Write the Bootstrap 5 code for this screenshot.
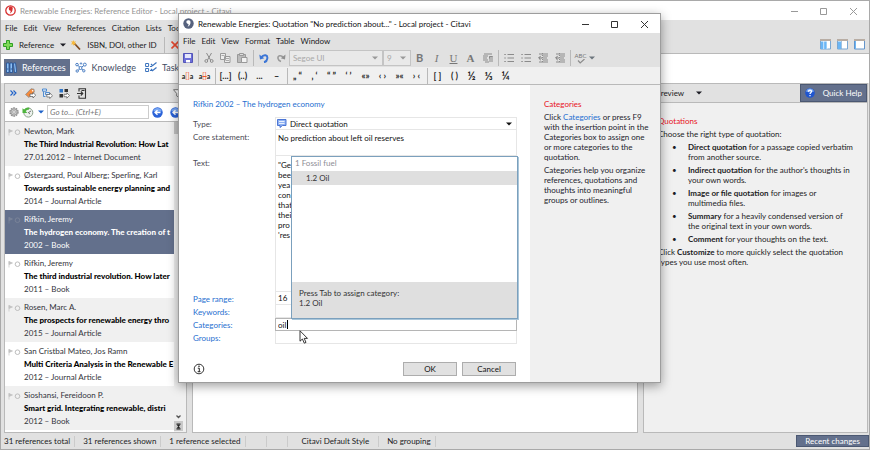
<!DOCTYPE html>
<html lang="en">
<head>
<meta charset="utf-8">
<meta name="viewport" content="width=device-width, initial-scale=1">
<title>Renewable Energies: Reference Editor - Citavi</title>
<link rel="stylesheet" href="https://cdn.jsdelivr.net/npm/bootstrap@5.3.0/dist/css/bootstrap.min.css">
<style>
  :root { --slate:#63708c; --bar:#e1e1e1; --pane:#f0f0f0; --line:#b9b9b9; --link:#1f6fd0; --alert:#e8121c; }
  body { font-family:Lato,"Open Sans",sans-serif; font-size:8px; line-height:10px; color:#1c1c24; background:var(--bar); }
  button, input, select, textarea { font:inherit; color:inherit; }
  button { background:none; border:0; padding:0; }
  svg { display:block; flex:none; }
  h1, h2, p, ul { font-size:inherit; line-height:inherit; margin:0; font-weight:400; }
  a { color:var(--link); text-decoration:none; }
  .bar { background:var(--bar); }
  .pane { background:var(--pane); }
  .titlebar { height:19px; background:#fff; }
  .titlebar h1 { font-size:8px; }
  .menus { height:16px; gap:6px; padding:0 4px; }
  .tools { height:18px; }
  .tool { width:17px; height:16px; display:flex; align-items:center; justify-content:center; }
  .rule { width:1px; height:16px; background:var(--line); margin:0 1px 0 2px; flex:none; }
  .win-btns { color:#333; padding-right:11px; }

  .app { min-height:100vh; border:1px solid #a9a9a9; }
  .app > .titlebar { color:#949494; }
  .app > .titlebar .win-btns { color:#999; }
  .main-tools { gap:5px; padding-left:2px; }
  .main-tools button { gap:6px; }
  .edge { border-bottom:1px solid var(--line); }
  .tabs { height:29px; background:#fff; padding:0 3px 2px; gap:3px; }
  .tab { height:17px; font-size:9px; gap:5px; padding:0 4px 0 2px; color:#3f4c63; }
  .tab.on { background:var(--slate); color:#fff; }
  .work { padding:0 1px 0 3px; gap:5px; background:var(--bar); }
  .frame { border:1px solid var(--line); min-width:0; }
  .side { width:183px; }
  .help { width:225px; }
  .phead { height:19px; }
  .finder { gap:3px; padding-left:4px; }
  .goto { width:102px; height:14px; border:1px solid #ccc; background:#fff; font-style:italic; padding:0 2px; }
  .goto::placeholder { color:#777; opacity:1; }
  .refs { width:169px; flex:none; overflow:hidden; }
  .ref { height:44px; padding:3px 0 0 3px; gap:3px; text-align:left; line-height:13px; white-space:nowrap; background:#fff; color:#33333b; align-items:flex-start; }
  .ref:nth-child(odd) { background:var(--pane); }
  .ref b { display:block; color:#000; font-weight:900; }
  .ref.on { background:var(--slate); color:#fff; }
  .ref.on b { color:#fff; }
  .track { background:var(--pane); padding-bottom:1px; }
  .thumb { height:12px; width:9px; background:#c3c3c3; }
  .solid { background:var(--slate); color:#fff; border:1px solid #4b5872; }
  .status { height:16px; }
  .status > span { padding:0 4px 0 8px; border-right:1px solid #cbcbcb; height:11px; white-space:nowrap; }
  .status > .first { padding-left:3px; }
  .status > .blank { width:21px; }
  .status > .roomy { padding:0 9px 0 14px; }
  .note { padding:13px 8px 0 14px; }
  .note p { margin-bottom:3px; }
  .note h2, .tips h2 { color:var(--alert); margin-bottom:3px; font-size:8px; line-height:10px; }
  .note ul { list-style:none; padding:0; }
  .note li { display:flex; margin-bottom:3px; padding-left:14px; }
  .note li::before { content:"\2022"; width:16px; flex:none; }

  .dialog-win { position:absolute; left:178px; top:13px; width:483px; background:#fff; border:1px solid #9d9d9d; box-shadow:0 3px 10px rgba(0,0,0,.38); z-index:5; }
  .dialog-win > .titlebar { color:#111; }
  .pick { display:grid; align-items:center; }
  .pick > * { grid-area:1/1; }
  .pick > svg, .pick > .caret-bar { pointer-events:none; }
  .pick select { appearance:none; border:0; background:none; width:100%; padding:0 0 0 14px; }
  .pick .end { justify-self:end; margin-right:4px; }
  .pick.off { border:1px solid #c4c4c4; height:16px; color:#999; background:#e9e9e9; }
  .pick.off select { padding:0 3px; opacity:1; color:#a8a8a8; }
  .pick.font-name { width:94px; }
  .pick.font-size { width:28px; }
  .letter { font-size:11px; color:#777; }
  .letter.serif { font-family:"Liberation Serif",serif; }
  .abc { font-size:6px; line-height:6px; color:#777; }
  .quotes { color:#222; }
  .quotes .tool { font-size:9px; font-weight:700; white-space:nowrap; }
  .quotes .frac { font-size:11px; }
  .quotes .ins { font-size:7px; }
  .ins i { font-style:normal; font-weight:400; color:#f0562a; }
  .form-side { padding:14px 13px 6px 14px; }
  .tips { width:130px; padding:14px 8px 0 14px; }
  .tips p { margin-bottom:3px; color:#22222c; }
  .fields { display:grid; grid-template-columns:82px 1fr; color:#4c4c55; }
  .fields > label, .fields > a { padding-top:2px; }
  .cell { border:1px solid #e6e6e6; border-top:0; height:13px; min-width:0; color:#111; padding:0; }
  .cell.first { border-top:1px solid #e6e6e6; }
  .cell input, .cell textarea { border:0; width:100%; height:100%; padding:0 2px; background:none; display:block; resize:none; outline:0; overflow:hidden; }
  .cell.core { height:26px; padding-top:3px; }
  .cell.body-text { height:136px; padding-top:4px; }
  .cell.active { border:1px solid #b5b5b5; }
  .caret-bar { width:1px; height:9px; background:#000; margin-left:11px; }
  .form-end { margin-top:18px; gap:5px; padding-right:1px; }
  .push { width:54px; height:14px; background:var(--bar); border:1px solid #adadad; color:#111; }
  .suggest { position:absolute; left:112px; top:142px; width:227px; height:163px; background:#fff; border:1px solid #7ba0bd; box-shadow:1px 1px 0 #a9c6da; color:#333; }
  .suggest .group { color:#8d8d95; padding:1px 3px; height:14px; }
  .suggest .hit { background:#dfdfdf; height:14px; padding:1px 14px; text-align:left; color:#333; }
  .suggest .hint { background:#dfdfdf; padding:6px 7px 10px; color:#333; }
  .pointer { position:absolute; left:120px; top:316px; }
</style>
<script src="https://cdn.jsdelivr.net/npm/bootstrap@5.3.0/dist/js/bootstrap.bundle.min.js"></script>
</head>
<body>
<svg width="0" height="0" class="position-absolute">
  <symbol id="down" viewBox="0 0 6 4"><path d="M0 .5h6L3 3.5z" fill="currentColor"/></symbol>
  <symbol id="win" viewBox="0 0 67 8"><g fill="none" stroke="currentColor"><path d="M0 4.500h7M29.500 1.500h6v6h-6z M59 1l7 7M66 1l-7 7"/></g></symbol>
  <symbol id="flag" viewBox="0 0 13 7"><path d="M1 0v6.500M1 .5l3.500 1.500L1 3.500z" fill="#bdbdbd" stroke="#c4c4c4" stroke-width=".7"/><circle cx="9.500" cy="3.200" r="2.300" fill="none" stroke="#bdbdbd"/></symbol>
  <symbol id="arrowball" viewBox="0 0 11 11"><circle cx="5.500" cy="5.500" r="5.200" fill="#2a62d8"/><path d="M1.200 4a4.600 4.600 0 0 1 8.600 0c-2 1.200-6 1.200-8.600 0z" fill="#7aa8f3"/><path d="M8.500 5.500h-5M5.500 3.200L3 5.500l2.500 2.300" fill="none" stroke="#fff" stroke-width="1.300"/></symbol>
  <symbol id="bullets" viewBox="0 0 10 10"><path d="M3.500 1.500H10M3.500 5H10M3.500 8.500H10M.3 1.500h1.500M.3 5h1.500M.3 8.500h1.500" stroke="#8b8b8b" fill="none"/></symbol>
  <symbol id="indent" viewBox="0 0 10 10"><path d="M1 1h9M5 3h5M5 5h4M5 7h5M1 9h9" stroke="#8b8b8b"/><path d="M4.500 5H1M2.800 2.800L.6 5l2.200 2.200" stroke="#777" fill="none"/><path d="M4.500 0v10" stroke="#8b8b8b" stroke-dasharray="1 1"/></symbol>
</svg>

<div class="app d-flex flex-column">
  <header class="titlebar d-flex align-items-center justify-content-between">
    <div class="d-flex align-items-center gap-1 ps-1">
      <svg width="11" height="11" viewBox="0 0 11 11"><circle cx="5.500" cy="5.500" r="4.700" fill="#fff" stroke="#d62f2f" stroke-width="1.300"/><path d="M4 2.500a2 1.700 0 0 1 3.600 1.600c0 2-1 3.600-2.800 4.400.7-1 1-1.800.9-2.700C4.200 5.600 3.300 4 4 2.500z" fill="#d62f2f"/></svg>
      <h1>Renewable Energies: Reference Editor - Local project - Citavi</h1>
    </div>
    <div class="win-btns"><svg width="67" height="8"><use href="#win"/></svg></div>
  </header>

  <nav class="menus bar d-flex align-items-center">
    <button>File</button><button>Edit</button><button>View</button><button>References</button><button>Citation</button><button>Lists</button><button>Tools</button>
  </nav>

  <div class="tools bar edge d-flex align-items-center justify-content-between">
    <div class="main-tools d-flex align-items-center">
      <button class="d-flex align-items-center">
        <svg width="10" height="10" viewBox="0 0 10 10"><path d="M3.500.5h3v3h3v3h-3v3h-3v-3h-3v-3h3z" fill="#7ed957" stroke="#2f9e24"/></svg>
        <span>Reference</span>
        <svg width="6" height="4"><use href="#down"/></svg>
      </button>
      <button class="d-flex align-items-center">
        <svg width="10" height="10" viewBox="0 0 10 10"><path d="M3.500 3.500l5.500 6" stroke="#7d4a21" stroke-width="1.700"/><path d="M2.500 0l.6 1.700L5 1.200 4 3l1.200 1.500-2-.3L2.500 6l-.6-1.800L0 4.400l1.200-1.600L0 1.300l1.900.3z" fill="#f6b93c"/></svg>
        <span>ISBN, DOI, other ID</span>
      </button>
      <div class="rule"></div>
      <button aria-label="Delete"><svg width="8" height="8" viewBox="0 0 8 8"><path d="M.5.5l7 7M7.500.5l-7 7" stroke="#e8492f" stroke-width="1.600"/></svg></button>
    </div>
    <div class="d-flex pe-1" style="gap:6px">
      <button aria-label="Three columns"><svg width="11" height="11" viewBox="0 0 11 11"><path d="M.5 1.500h10v8.500H.5z" fill="#fff" stroke="#7aa7d3"/><path d="M0 0h11v2H0z" fill="#b8ada4"/><path d="M1 2.500h6V10H1z" fill="#6bb6f5"/><path d="M3.700 2v8M7 2v8" stroke="#fff" stroke-width=".7"/></svg></button>
      <button aria-label="Two columns"><svg width="11" height="11" viewBox="0 0 11 11"><path d="M.5 1.500h10v8.500H.5z" fill="#fff" stroke="#7aa7d3"/><path d="M0 0h11v2H0z" fill="#b8ada4"/><path d="M1 2.500h3V10H1z" fill="#6bb6f5"/><path d="M4.500 2v8" stroke="#7aa7d3" stroke-width=".7"/></svg></button>
      <button aria-label="One column"><svg width="11" height="11" viewBox="0 0 11 11"><path d="M.5 1.500h10v8.500H.5z" fill="#fff" stroke="#6394cb"/><path d="M0 0h11v2H0z" fill="#b8ada4"/><path d="M1.500 2v8" stroke="#6bb6f5"/></svg></button>
    </div>
  </div>

  <nav class="tabs d-flex align-items-center">
    <button class="tab on d-flex align-items-center">
      <svg width="11" height="11" viewBox="0 0 11 11"><path d="M.5 1h2.500v9.500H.5zM4 1h2.500v9.500H4zM7.500 1.300l2-.5 1.200 9.400-2.200.4z" fill="#8fc1f5" stroke="#1f4f96" stroke-width=".8"/><path d="M1.200 7h1.200M4.700 7h1.200" stroke="#1f4f96"/></svg>References
    </button>
    <button class="tab d-flex align-items-center">
      <svg width="12" height="11" viewBox="0 0 12 11"><path d="M2.500 3l3 3 4-3M5.500 6l-3 3M5.500 6l3 2.500" stroke="#4a7fc0" fill="none"/><g fill="#fff" stroke="#3b73bd" stroke-width=".9"><circle cx="2" cy="2.600" r="1.300"/><circle cx="9.800" cy="2.600" r="1.500"/><circle cx="5.500" cy="6" r="1.500"/><circle cx="2.200" cy="9" r="1.200"/><circle cx="8.800" cy="8.800" r="1.200"/><circle cx="6" cy="1.500" r=".7"/></g></svg>Knowledge
    </button>
    <button class="tab d-flex align-items-center">
      <svg width="12" height="11" viewBox="0 0 12 11"><path d="M.6 1.500h3v3h-3zM.6 6.500h3v3h-3zM5 4.500h2M5 8.500h2" fill="none" stroke="#3b73bd"/><path d="M6 2l1.500 1.700L11.500.5M6 7l1.500 1.700 4-3.200" stroke="#3b73bd" fill="none" stroke-width="1.200"/></svg>Tasks
    </button>
  </nav>

  <main class="work d-flex flex-fill">
    <section class="side frame pane d-flex flex-column">
      <div class="phead bar edge d-flex align-items-center">
        <div class="tool"><svg width="7" height="6" viewBox="0 0 7 6"><path d="M.5.5L3 3 .5 5.500M3.500.5L6 3 3.500 5.500" fill="none" stroke="#1f62c9" stroke-width="1.100"/></svg></div>
        <button class="tool" aria-label="Assign category"><svg width="11" height="11" viewBox="0 0 11 11"><path d="M.5 6.500L6 .8l3 .4.3 2.800L4 9.500z" fill="#f58a3c" stroke="#8d8d8d" stroke-width=".8"/><circle cx="7.600" cy="2.700" r=".8" fill="#fff"/><path d="M5 6h3V4.500l2.700 2.700L8 10V8.500H5z" fill="#fff" stroke="#555" stroke-width=".7"/></svg></button>
        <button class="tool" aria-label="Move to group"><svg width="11" height="11" viewBox="0 0 11 11"><path d="M.5 1h4v2.200h-4zM3.500 4.500h4v2H3.500zM1.500 3.500v5h2" fill="#dcebfb" stroke="#2f76c9" stroke-width=".8"/><path d="M4.800 6.500h3V5l2.700 2.700L7.800 10.500V9h-3z" fill="#fff" stroke="#555" stroke-width=".7"/></svg></button>
        <button class="tool" aria-label="Apply label"><svg width="11" height="11" viewBox="0 0 11 11"><path d="M.5 1H4v3.500H.5z" fill="#2f76c9"/><path d="M5.500 1H9v3H5.500zM.5 6H4v3.500H.5z" fill="#333"/><path d="M5 6.300h2.800V4.800l2.700 2.700-2.700 2.700V8.700H5z" fill="#fff" stroke="#555" stroke-width=".7"/></svg></button>
        <button class="tool" aria-label="Export"><svg width="11" height="11" viewBox="0 0 11 11"><path d="M3 3.500V.7h6.500v9.600H3V7.500M1 5.500h5.500M4.800 3.500l2 2-2 2M5.500 2.500h3" fill="none" stroke="#333" stroke-width="1.100"/></svg></button>
        <button class="ms-auto pe-1" aria-label="Filter"><svg width="9" height="9" viewBox="0 0 9 9"><path d="M.5.7h8L5.500 4.500V8L3.700 7V4.500z" fill="#fff" stroke="#777"/></svg></button>
      </div>
      <div class="phead finder edge d-flex align-items-center bg-white">
        <button aria-label="Settings"><svg width="10" height="10" viewBox="0 0 10 10"><circle cx="5" cy="5" r="4" fill="none" stroke="#8d8d8d" stroke-width="1.400" stroke-dasharray="1.800 .7"/><circle cx="5" cy="5" r="3.200" fill="#ccc" stroke="#8d8d8d" stroke-width=".8"/><circle cx="5" cy="5" r="1.300" fill="#fff" stroke="#888" stroke-width=".6"/></svg></button>
        <button class="d-flex align-items-center gap-1" aria-label="History"><svg width="12" height="11" viewBox="0 0 12 11"><circle cx="6.300" cy="5.600" r="4.500" fill="#eef2ee" stroke="#8aa08a"/><path d="M6.300 5.600L9 4M6.300 5.600L8 7" stroke="#555" stroke-width=".8"/><path d="M.5 6V1.200l1.600 1.400A5.500 5.500 0 0 1 7.500.7L6.800 2.800a3.500 3.500 0 0 0-3.100 1.400L5.400 6z" fill="#4fb53f"/></svg>
        <svg width="6" height="4" color="#1f62c9"><use href="#down"/></svg></button>
        <input class="goto" type="text" placeholder="Go to... (Ctrl+E)" aria-label="Go to">
        <button class="pe-1" aria-label="Back"><svg width="11" height="11"><use href="#arrowball"/></svg></button>
        <button aria-label="Forward"><svg width="11" height="11"><use href="#arrowball"/></svg></button>
      </div>
      <div class="d-flex flex-fill">
        <div class="refs d-flex flex-column bg-white">
          <button class="ref d-flex"><svg class="mt-1" width="13" height="7"><use href="#flag"/></svg><span>Newton, Mark<b>The Third Industrial Revolution: How Lat</b>27.01.2012 – Internet Document</span></button>
          <button class="ref d-flex"><svg class="mt-1" width="13" height="7"><use href="#flag"/></svg><span>Østergaard, Poul Alberg; Sperling, Karl<b>Towards sustainable energy planning and</b>2014 – Journal Article</span></button>
          <button class="ref on d-flex"><svg class="mt-1 opacity-25" width="13" height="7"><use href="#flag"/></svg><span>Rifkin, Jeremy<b>The hydrogen economy. The creation of t</b>2002 – Book</span></button>
          <button class="ref d-flex"><svg class="mt-1" width="13" height="7"><use href="#flag"/></svg><span>Rifkin, Jeremy<b>The third industrial revolution. How later</b>2011 – Book</span></button>
          <button class="ref d-flex"><svg class="mt-1" width="13" height="7"><use href="#flag"/></svg><span>Rosen, Marc A.<b>The prospects for renewable energy thro</b>2015 – Journal Article</span></button>
          <button class="ref d-flex"><svg class="mt-1" width="13" height="7"><use href="#flag"/></svg><span>San Cristbal Mateo, Jos Ramn<b>Multi Criteria Analysis in the Renewable E</b>2012 – Journal Article</span></button>
          <button class="ref d-flex"><svg class="mt-1" width="13" height="7"><use href="#flag"/></svg><span>Sioshansi, Fereidoon P.<b>Smart grid. Integrating renewable, distri</b>2012 – Book</span></button>
        </div>
        <div class="track d-flex flex-column flex-fill align-items-start">
          <div class="thumb mb-auto"></div>
          <svg width="9" height="9" viewBox="0 0 9 9"><path d="M2.500 3.500l2 2 2-2" fill="none" stroke="#555" stroke-width="1.300"/></svg>
          <svg width="9" height="10" viewBox="0 0 9 10"><path d="M0 0h9v10H0z" fill="#c9c9c9"/><path d="M2.500 3h4M2.500 8h4" stroke="#222"/><path d="M2.500 3.500h4L4.500 6zM2.500 7.500L4.500 5l2 2.500z" fill="#222"/></svg>
        </div>
      </div>
    </section>

    <section class="frame flex-fill bg-white"></section>

    <section class="help frame pane">
      <div class="phead bar edge d-flex align-items-center justify-content-between">
        <button class="d-flex align-items-center"><span class="ps-2 ms-1 pe-2">Preview</span><svg class="ms-1" width="6" height="4"><use href="#down"/></svg></button>
        <button class="solid d-flex align-items-center gap-2 px-1 h-100">
          <svg width="10" height="10" viewBox="0 0 10 10"><circle cx="5" cy="5" r="4.800" fill="#1f55cf"/><path d="M1 3.500a4.200 4.200 0 0 1 8 0c-2 1-6 1-8 0z" fill="#79a7f2"/><path d="M3.500 3.700C3.500 1.500 6.600 1.600 6.500 3.600 6.500 4.700 5 4.700 5 6M5 7v1.300" fill="none" stroke="#fff" stroke-width="1.200"/></svg>
          <span>Quick Help</span></button>
      </div>
      <div class="note">
        <h2>Quotations</h2>
        <p>Choose the right type of quotation:</p>
        <ul>
          <li><span><b>Direct quotation</b> for a passage copied verbatim<br>from another source.</span></li>
          <li><span><b>Indirect quotation</b> for the author's thoughts in<br>your own words.</span></li>
          <li><span><b>Image or file quotation</b> for images or<br>multimedia files.</span></li>
          <li><span><b>Summary</b> for a heavily condensed version of<br>the original text in your own words.</span></li>
          <li><span><b>Comment</b> for your thoughts on the text.</span></li>
        </ul>
        <p>Click <b>Customize</b> to more quickly select the quotation<br>types you use most often.</p>
      </div>
    </section>
  </main>

  <footer class="status bar d-flex align-items-center">
    <span class="first">31 references total</span><span>31 references shown</span><span>1 reference selected</span><span class="blank"></span><span class="blank"></span><span class="roomy">Citavi Default Style</span><span>No grouping</span>
    <button class="solid ms-auto px-2">Recent changes</button>
  </footer>
</div>

<div class="dialog-win" role="dialog" aria-labelledby="dlg-title">
  <header class="titlebar d-flex align-items-center justify-content-between">
    <div class="d-flex align-items-center gap-1 ps-1">
      <svg width="11" height="11" viewBox="0 0 11 11"><circle cx="5.500" cy="5.500" r="5.200" fill="#56627e"/><path d="M3.500 3a2.200 1.900 0 0 1 4 1.300c0 2-1 3.600-2.900 4.400.8-1 1-1.900.9-2.700C4 6 3 4.600 3.500 3z" fill="#fff"/></svg>
      <h1 id="dlg-title">Renewable Energies: Quotation "No prediction about..." - Local project - Citavi</h1>
    </div>
    <div class="win-btns"><svg width="67" height="8"><use href="#win"/></svg></div>
  </header>
  <nav class="menus bar d-flex align-items-center">
    <button>File</button><button>Edit</button><button>View</button><button>Format</button><button>Table</button><button>Window</button>
  </nav>
  <div class="tools bar d-flex align-items-center text-secondary">
    <button class="tool" aria-label="Save"><svg width="10" height="10" viewBox="0 0 10 10"><path d="M.5.5h9v9h-9z" fill="#6d6fd8" stroke="#5355b8"/><path d="M2 1h6v4H2z" fill="#e4e6fb"/><path d="M3 7h4v2.500H3z" fill="#fff"/></svg></button>
    <div class="rule"></div>
    <button class="tool" aria-label="Cut"><svg width="10" height="10" viewBox="0 0 10 10"><path d="M2.500 0l4 7M7.500 0l-4 7" stroke="#8b8b8b"/><circle cx="2.300" cy="8" r="1.400" fill="none" stroke="#8b8b8b"/><circle cx="7.700" cy="8" r="1.400" fill="none" stroke="#8b8b8b"/></svg></button>
    <button class="tool" aria-label="Copy"><svg width="11" height="10" viewBox="0 0 11 10"><path d="M.5.5h5v6h-5zM4.500 3.500h5.500v6H4.500z" fill="#eee" stroke="#9a9a9a"/><path d="M5.500 5.500h3.500M5.500 7.500h3.500M1.500 2.500h3" stroke="#aaa"/></svg></button>
    <button class="tool" aria-label="Paste"><svg width="11" height="10" viewBox="0 0 11 10"><path d="M.5 1.500h8v8h-8z" fill="#bbb" stroke="#999"/><path d="M2.500.5h4v2h-4z" fill="#ddd" stroke="#999"/><path d="M4.500 4.500h5.500v5H4.500z" fill="#f2f2f2" stroke="#999"/></svg></button>
    <div class="rule"></div>
    <button class="tool" aria-label="Undo"><svg width="10" height="10" viewBox="0 0 10 10"><path d="M2 4.500C5 .8 9 2 8.300 5.500 8 7.500 6.500 9 5 9.300" fill="none" stroke="#3d76d6" stroke-width="1.900"/><path d="M.3 1.500L1 6.500l4.300-1.300z" fill="#3d76d6"/></svg></button>
    <button class="tool" aria-label="Redo"><svg width="10" height="10" viewBox="0 0 10 10"><path d="M7.500 4.500C5 1.500 1.500 2.500 2 5.500 2.300 7 3.500 8 5 8.500" fill="none" stroke="#9a9a9a" stroke-width="1.500"/><path d="M9.500 1.500L9 6.500 4.800 5.200z" fill="#8f8f8f"/></svg></button>
    <div class="pick off font-name"><select disabled aria-label="Font"><option>Segoe UI</option></select><svg class="end" width="6" height="4"><use href="#down"/></svg></div>
    <div class="pick off font-size"><select disabled aria-label="Size"><option>9</option></select><svg class="end" width="6" height="4"><use href="#down"/></svg></div>
    <button class="tool letter fw-bold">B</button>
    <button class="tool letter serif fst-italic">I</button>
    <button class="tool letter serif text-decoration-underline">U</button>
    <button class="tool letter serif fw-bold">A</button>
    <button class="tool" aria-label="Paragraph"><svg width="10" height="10" viewBox="0 0 10 10"><path d="M1 1h8M0 3h5M0 5h4M0 7h5M2 9h4M7 3v6M9 3v6M9.500 3.500H6.500v2" stroke="#8b8b8b" fill="none"/></svg></button>
    <div class="rule"></div>
    <button class="tool" aria-label="Bullets"><svg width="10" height="10"><use href="#bullets"/></svg></button>
    <button class="tool" aria-label="Numbering"><svg width="10" height="10"><use href="#bullets"/></svg></button>
    <button class="tool" aria-label="Outdent"><svg width="10" height="10"><use href="#indent"/></svg></button>
    <button class="tool" aria-label="Indent"><svg width="10" height="10"><use href="#indent"/></svg></button>
    <div class="rule"></div>
    <button class="tool flex-column abc"><span>ABC</span><svg width="8" height="5" viewBox="0 0 8 5"><path d="M1 1.500L3.200 4 7.500 0" fill="none" stroke="#8b8b8b" stroke-width="1.200"/></svg></button>
    <svg width="6" height="4"><use href="#down"/></svg>
  </div>
  <div class="tools pane edge d-flex align-items-center quotes">
    <button class="tool ins">a<i>[]</i>a</button><button class="tool ins">a<i class="text-decoration-line-through">[]</i>a</button>
    <div class="rule"></div>
    <button class="tool">[...]</button><button class="tool">(..)</button><button class="tool">...</button><button class="tool">–</button>
    <div class="rule"></div>
    <button class="tool">„ “</button><button class="tool">‚ ‘</button><button class="tool">“ ”</button><button class="tool">‘ ’</button><button class="tool">«»</button><button class="tool">‹ ›</button><button class="tool">»«</button><button class="tool">› ‹</button>
    <div class="rule"></div>
    <button class="tool">[ ]</button><button class="tool">( )</button><button class="tool frac">½</button><button class="tool frac">⅓</button><button class="tool frac">¼</button>
  </div>
  <div class="d-flex">
    <div class="form-side flex-fill">
      <a href="#" class="d-block mb-2">Rifkin 2002 – The hydrogen economy</a>
      <div class="fields">
        <label for="f-type">Type:</label>
        <div class="cell first pick"><select id="f-type"><option>Direct quotation</option></select>
          <svg width="11" height="9" viewBox="0 0 11 9"><path d="M1.500.5h8.500v6H6.500L4 8.500v-2H1.500z" fill="#8fb2f3" stroke="#3f6bd0" stroke-width=".9"/><path d="M3 2.500h5.500M3 4.500h5.500" stroke="#fff" stroke-width=".8"/></svg>
          <svg class="end" width="6" height="4"><use href="#down"/></svg></div>
        <label for="f-core">Core statement:</label>
        <div class="cell core"><textarea id="f-core">No prediction about left oil reserves</textarea></div>
        <label for="f-text">Text:</label>
        <div class="cell body-text"><textarea id="f-text">"Ge
bee
yea
con
that
thei
pro
'res</textarea></div>
        <a href="#">Page range:</a><div class="cell"><input aria-label="Page range" value="16"></div>
        <a href="#">Keywords:</a><div class="cell"><input aria-label="Keywords"></div>
        <a href="#">Categories:</a><div class="cell active pick"><input aria-label="Categories" value="oil"><div class="caret-bar"></div></div>
        <a href="#">Groups:</a><div class="cell"><input aria-label="Groups"></div>
      </div>
      <div class="form-end d-flex align-items-center">
        <button class="me-auto" aria-label="Information"><svg width="12" height="12" viewBox="0 0 12 12"><circle cx="6" cy="6" r="4.800" fill="#fff" stroke="#333"/><path d="M4.800 5.200h1.500v3.300M4.700 8.700h2.800" stroke="#222" fill="none"/><circle cx="6" cy="3.300" r=".8" fill="#222"/></svg></button>
        <button class="push">OK</button><button class="push">Cancel</button>
      </div>
    </div>
    <aside class="tips pane">
      <h2>Categories</h2>
      <p>Click <a href="#">Categories</a> or press F9<br>with the insertion point in the<br>Categories box to assign one<br>or more categories to the<br>quotation.</p>
      <p>Categories help you organize<br>references, quotations and<br>thoughts into meaningful<br>groups or outlines.</p>
    </aside>
  </div>
  <div class="suggest d-flex flex-column">
    <div class="group">1 Fossil fuel</div>
    <button class="hit">1.2 Oil</button>
    <div class="hint mt-auto">Press Tab to assign category:<br>1.2 Oil</div>
  </div>
  <svg class="pointer" width="10" height="14" viewBox="0 0 10 14"><path d="M1 .8v10.400l2.400-2.200 1.900 4.200 1.700-.8-1.800-4h3.300z" fill="#fff" stroke="#222" stroke-width=".9"/></svg>
</div>
</body>
</html>
